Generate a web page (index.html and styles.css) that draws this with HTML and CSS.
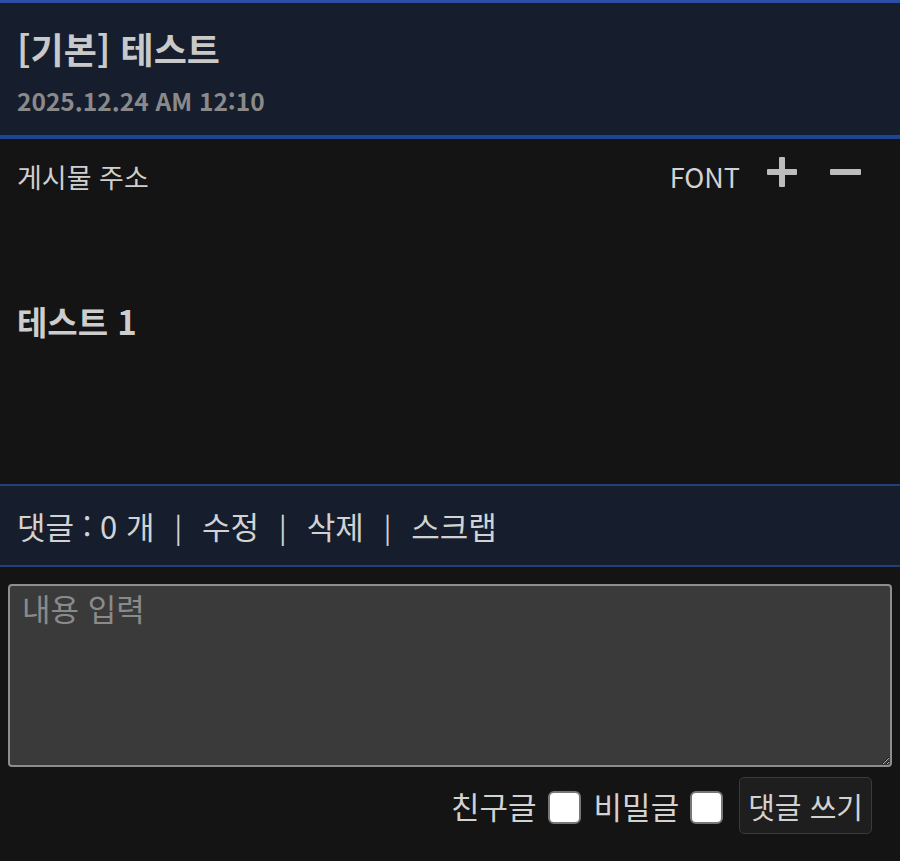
FILE: index.html
```html
<!DOCTYPE html>
<html lang="ko">
<head>
<meta charset="utf-8">
<title>[기본] 테스트</title>
<link rel="stylesheet" href="styles.css">
</head>
<body>
<header class="post-head">
  <h1 class="post-title">[기본] 테스트</h1>
  <div class="post-date">2025.12.24 AM 12:10</div>
</header>
<section class="post-body">
  <div class="post-tools">
    <span class="post-url">게시물 주소</span>
    <div class="font-ctrl">
      <span class="font-label">FONT</span>
      <button class="icon-btn" aria-label="글자 크게">
        <svg width="32" height="32" viewBox="0 0 32 32"><rect x="1" y="13" width="30" height="6" rx="1" fill="#bdbdbd"/><rect x="13" y="1" width="6" height="30" rx="1" fill="#bdbdbd"/></svg>
      </button>
      <button class="icon-btn" aria-label="글자 작게">
        <svg width="32" height="32" viewBox="0 0 32 32"><rect x="1" y="13" width="31" height="6" rx="1" fill="#bdbdbd"/></svg>
      </button>
    </div>
  </div>
  <div class="post-content">테스트 1</div>
</section>
<nav class="comment-bar">
  <span>댓글 : 0 개</span><span class="sep">|</span><span>수정</span><span class="sep">|</span><span>삭제</span><span class="sep">|</span><span>스크랩</span>
</nav>
<form class="comment-form">
  <textarea class="comment-input" placeholder="내용 입력"></textarea>
  <div class="comment-actions">
    <label class="opt">친구글<span class="box"></span></label>
    <label class="opt">비밀글<span class="box"></span></label>
    <button type="button" class="submit-btn">댓글 쓰기</button>
  </div>
</form>
</body>
</html>
```
FILE: styles.css
```css
* { box-sizing: border-box; }
html, body {
  margin: 0;
  padding: 0;
  background: #141414;
  font-family: "Noto Sans CJK KR", "Noto Sans", sans-serif;
  color: #d2d2d2;
}
.post-head {
  background: #161e2d;
  border-top: 3px solid #2b4ea6;
  border-bottom: 4px solid #1c4596;
  padding: 25px 17px 19px;
}
.post-title {
  margin: 0;
  font-size: 36px;
  line-height: 40px;
  font-weight: 700;
  color: #c9c9c9;
}
.post-date {
  margin-top: 18px;
  font-size: 24.5px;
  line-height: 30px;
  font-weight: 700;
  color: #8a8a8a;
}
.post-body {
  padding: 22px 17px 0;
  height: 345px;
}
.post-tools {
  display: flex;
  justify-content: space-between;
  align-items: center;
  height: 32px;
}
.post-url {
  font-size: 27px;
  line-height: 32px;
  color: #cfcfcf;
}
.font-ctrl {
  display: flex;
  align-items: center;
  margin-right: 22px;
}
.font-label {
  font-size: 27px;
  line-height: 32px;
  color: #d2d2d2;
  margin-right: 26px;
}
.icon-btn {
  background: none;
  border: 0;
  padding: 0;
  width: 32px;
  height: 32px;
  display: flex;
  margin-top: -10px;
}
.icon-btn + .icon-btn { margin-left: 31px; }
.post-content {
  margin-top: 108px;
  font-size: 33px;
  font-weight: 700;
  line-height: 40px;
  color: #cdcdcd;
}
.comment-bar {
  background: #161e2d;
  border-top: 2px solid #21407c;
  border-bottom: 2px solid #21407c;
  height: 83px;
  padding: 0 17px;
  display: flex;
  align-items: center;
  font-size: 31px;
  color: #d2d2d2;
}
.sep {
  margin: 0 20px;
  font-size: 28px;
}
.comment-form {
  padding: 17px 8px 0;
}
.comment-input {
  display: block;
  width: 100%;
  height: 183px;
  background: #3a3a3a;
  border: 2px solid #8d8d8d;
  border-radius: 4px;
  padding: 2px 12px;
  font-family: "Noto Sans CJK KR", "Noto Sans", sans-serif;
  font-size: 31px;
  line-height: 40px;
  color: #d2d2d2;
  resize: vertical;
}
.comment-input::placeholder { color: #8a8a8a; }
.comment-actions {
  display: flex;
  justify-content: flex-end;
  align-items: center;
  margin-top: 10px;
  padding-right: 20px;
}
.opt {
  display: flex;
  align-items: center;
  font-size: 31px;
  color: #d2d2d2;
  gap: 11px;
  margin-right: 13px;
}
.opt + .opt { margin-right: 16px; }
.box {
  display: inline-block;
  width: 33px;
  height: 33px;
  margin-top: 3px;
  background: #fff;
  border: 2px solid #777;
  border-radius: 6px;
}
.submit-btn {
  height: 57px;
  padding: 0 8px;
  background: #1e1e1e;
  border: 1px solid #3a3a3a;
  border-radius: 5px;
  font-family: "Noto Sans CJK KR", "Noto Sans", sans-serif;
  font-size: 29px;
  color: #d2d2d2;
}
```
